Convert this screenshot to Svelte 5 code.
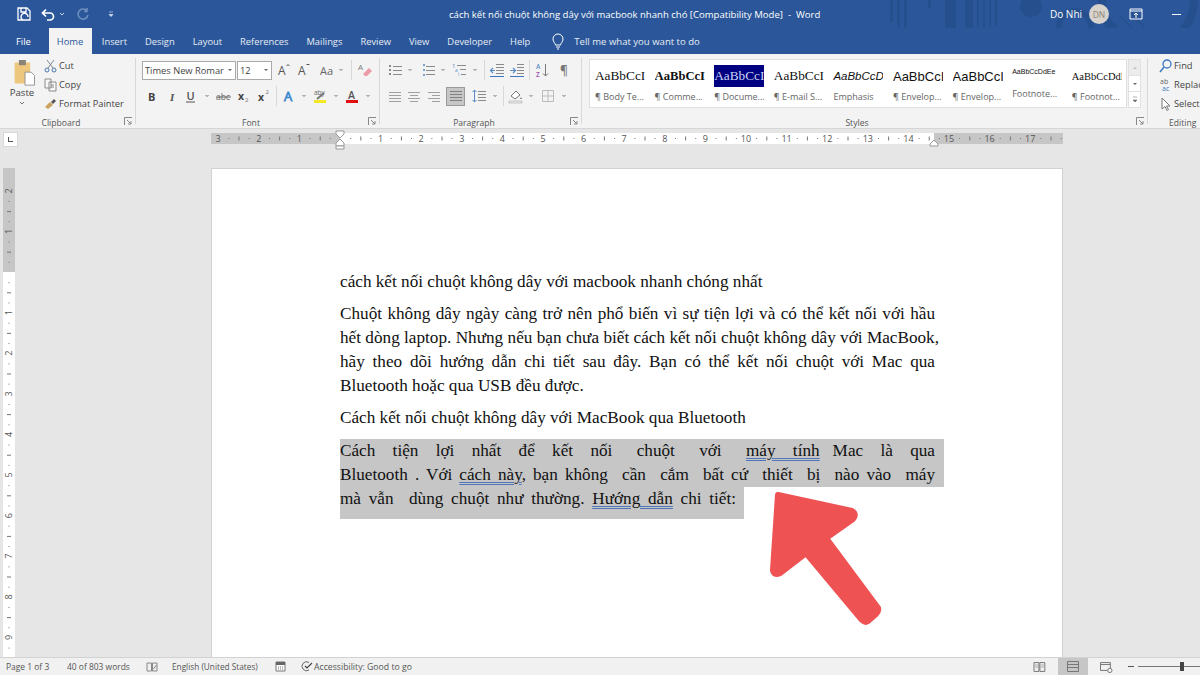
<script>
	const G = '#6b6b6b';
	const L = '#8a8a8a';
	const B = '#5a8cc8';

	const lines = (ys, x1, x2, c = L) => ys.map((y) => `<path d="M${x1} ${y}H${x2}" stroke="${c}"/>`).join('');
	const dots = (ys, x, c = G) => ys.map((y) => `<rect x="${x}" y="${y - 1}" width="2" height="2" fill="${c}"/>`).join('');

	const icons = {
		chev: `<path d="M6.5 7l1.5 1.5L9.5 7" fill="none" stroke="#777"/>`,
		grow: `<text x="2" y="13" font-size="12" fill="#555">A</text><path d="M10.5 4l1.5-1.5L13.500 4" fill="none" stroke="#555"/>`,
		shrink: `<text x="2" y="13" font-size="12" fill="#555">A</text><path d="M10.500 2.500h3" fill="none" stroke="#555"/>`,
		aa: `<text x="1" y="12.500" font-size="11" fill="#666">Aa</text>`,
		eraser: `<text x="1" y="8" font-size="8" fill="#777">A</text><path d="M6 12l6-6 3 3-5 5H8z" fill="#ec9aa6"/>`,
		bold: `<text x="4" y="12.500" font-size="11" font-weight="700" fill="#444">B</text>`,
		italic: `<text x="6" y="12.500" font-size="11" font-weight="700" font-style="italic" font-family="Liberation Serif" fill="#555">I</text>`,
		under: `<text x="3.500" y="11.500" font-size="11" font-weight="600" fill="#555">U</text><path d="M3 14h9" stroke="#555"/>`,
		strike: `<text x="0" y="11.500" font-size="8.500" fill="#666">abc</text><path d="M0 9h15" stroke="#666"/>`,
		sub: `<text x="2" y="11.500" font-size="10.500" font-weight="700" fill="#444">x</text><text x="9" y="14" font-size="6" fill="#777">2</text>`,
		sup: `<text x="2" y="12.500" font-size="10.500" font-weight="700" fill="#444">x</text><text x="9.500" y="6" font-size="6" fill="#777">2</text>`,
		textfx: `<text x="3" y="13" font-size="13" fill="#d8e8f7" stroke="#3a86d0" stroke-width=".8">A</text>`,
		marker: `<text x="2" y="7" font-size="6.500" fill="#666">aby</text><path d="M5 11l7-6" stroke="#777" stroke-width="2"/><rect x="2" y="12" width="12" height="3" fill="#f4e826"/>`,
		color: `<text x="4" y="10.500" font-size="10.500" font-weight="600" fill="#555">A</text><rect x="2" y="12" width="12" height="3" fill="#e01010"/>`,
		bullets: dots([4, 8, 12], 2, L) + lines([4.500, 8.500, 12.500], 6, 15),
		numbers: dots([3, 8, 13], 3, '#7aa3d4') + lines([4.500, 8.500, 12.500], 6, 15),
		multi: `<text x="1" y="6" font-size="6" fill="#5a8cc8">1</text><text x="4" y="10" font-size="5" fill="#5a8cc8">a</text><text x="7" y="14" font-size="5" fill="#5a8cc8">i</text>` + lines([3.500], 6, 15) + lines([7.500], 9, 15) + lines([12.500], 10, 15),
		outdent: lines([2.500, 5.500, 8.500, 11.500], 7, 15) + `<path d="M1 14.500h14" stroke="#3a78c2"/><path d="M6 8.500H1.500M4 6l-2.500 2.500L4 11" fill="none" stroke="${B}" stroke-width="1.200"/>`,
		indent: lines([2.500, 5.500, 8.500, 11.500], 8, 15) + `<path d="M1 14.500h14" stroke="#3a78c2"/><path d="M1 8.500h5M4 6l2.500 2.500L4 11" fill="none" stroke="${B}" stroke-width="1.200"/>`,
		sort: `<text x="2" y="6.500" font-size="6.500" font-weight="600" fill="#5a8cc8">A</text><text x="2" y="14.500" font-size="6.500" font-weight="600" fill="#a04bb0">Z</text><path d="M11.500 2v12M9 11.500l2.500 2.500 2.500-2.500" fill="none" stroke="#777"/>`,
		pilcrow: `<text x="3" y="13" font-size="12" font-weight="600" fill="#777">¶</text>`,
		left: lines([4.500, 7.500, 10.500, 13.500], 2, 14, '#a0a0a0'),
		center: lines([4.500, 10.500], 2, 14, '#a0a0a0') + lines([7.500, 13.500], 4, 12, '#a0a0a0'),
		right: lines([4.500, 10.500], 2, 14, '#a0a0a0') + lines([7.500, 13.500], 6, 14, '#a0a0a0'),
		justify: lines([3.500, 6.500, 9.500, 12.500], 2, 14, '#808080'),
		spacing: `<path d="M3.500 2v12M1.500 4l2-2 2 2M1.500 12l2 2 2-2" fill="none" stroke="${B}"/>` + lines([3.500, 6.500, 9.500, 12.500], 7, 15),
		shade: `<path d="M3 8l5-5 4 4-5 4z" fill="#fff" stroke="#777"/><rect x="1" y="13" width="13" height="2" fill="#eee" stroke="#999" stroke-width=".5"/><path d="M13 9l1 2h-2z" fill="#777"/>`,
		border: `<path d="M2.500 2.500h11v11h-11zM8 2.500v11M2.500 8h11" fill="none" stroke="#bbb"/>`
	};

	const fontTop = [
		{ k: 'grow', w: 24 }, { k: 'shrink', w: 16 }, { w: 4 }, { k: 'aa', w: 22 }, { k: 'chev', w: 6 },
		{ k: 'sep', w: 14 }, { k: 'eraser', w: 14 }
	];
	const fontBottom = [
		{ k: 'bold', w: 20 }, { k: 'italic', w: 20 }, { k: 'under', w: 18 }, { k: 'chev', w: 14 },
		{ k: 'strike', w: 20 }, { k: 'sub', w: 20 }, { k: 'sup', w: 20 }, { k: 'sep', w: 4 },
		{ k: 'textfx', w: 22 }, { k: 'chev', w: 7 }, { k: 'marker', w: 26 }, { k: 'chev', w: 6 },
		{ k: 'color', w: 26 }, { k: 'chev', w: 6 }
	];
	const paraTop = [
		{ k: 'bullets', w: 18 }, { k: 'chev', w: 12 }, { k: 'numbers', w: 24 }, { k: 'chev', w: 6 },
		{ k: 'multi', w: 26 }, { k: 'chev', w: 6 }, { k: 'sep', w: 12 }, { k: 'outdent', w: 14 },
		{ k: 'indent', w: 25 }, { k: 'sep', w: 1 }, { k: 'sort', w: 23 }, { k: 'pilcrow', w: 24 }
	];
	const paraBottom = [
		{ k: 'left', w: 18 }, { k: 'center', w: 20 }, { k: 'right', w: 20 }, { w: 2 },
		{ k: 'justify', w: 19, on: true }, { k: 'spacing', w: 28 }, { k: 'chev', w: 4 }, { k: 'sep', w: 12 },
		{ k: 'shade', w: 14 }, { k: 'chev', w: 16 }, { k: 'border', w: 18 }, { k: 'chev', w: 14 }
	];

	const tabs = ['Insert', 'Design', 'Layout', 'References', 'Mailings', 'Review', 'View', 'Developer', 'Help'];

	const styles = [
		{ s: 'AaBbCcI', l: '¶ Body Te...', c: 'serif' },
		{ s: 'AaBbCcI', l: '¶ Comme...', c: 'serif strong' },
		{ s: 'AaBbCcI', l: '¶ Docume...', c: 'serif navy' },
		{ s: 'AaBbCcI', l: '¶ E-mail S...', c: 'serif' },
		{ s: 'AaBbCcD', l: 'Emphasis', c: 'ital' },
		{ s: 'AaBbCcI', l: '¶ Envelop...', c: 'sans' },
		{ s: 'AaBbCcI', l: '¶ Envelop...', c: 'sans' },
		{ s: 'AaBbCcDdEe', l: 'Footnote...', c: 'tiny' },
		{ s: 'AaBbCcDdE', l: '¶ Footnot...', c: 'serif small' }
	];

	// ruler numbers sit one cm apart, starting from the left margin
	const CM = 40.6;
	const hMarks = [];
	for (let n = -3; n <= 17; n++) hMarks.push({ n: Math.abs(n), x: 129 + n * CM });
	const vMarks = [];
	for (let n = -2; n <= 9; n++) vMarks.push({ n: Math.abs(n), y: 104 + n * CM });
	const quarter = [10.15, 20.3, 30.45];
</script>

{#snippet cells(items)}
	{#each items as it}
		{#if it.k === 'sep'}
			<span class="cell" style="width:{it.w}px"><i class="vsep"></i></span>
		{:else if it.k}
			<span class="cell" class:on={it.on} style="width:{it.w}px">
				<svg width="16" height="16" viewBox="0 0 16 16">{@html icons[it.k]}</svg>
			</span>
		{:else}
			<span class="cell" style="width:{it.w}px"></span>
		{/if}
	{/each}
{/snippet}

{#snippet launcher()}
	<svg class="launch" width="9" height="9" viewBox="0 0 9 9">
		<path d="M.5 8V.5H8M3 3l4 4M4 7h3V4" fill="none" stroke="#888" />
	</svg>
{/snippet}

<div class="app">
	<header class="titlebar">
		<svg class="deco" width="350" height="54" viewBox="850 0 350 54">
			<g fill="#264f8e">
				<rect x="890" y="0" width="3" height="22" /><rect x="897" y="0" width="3" height="27" />
				<rect x="904" y="0" width="3" height="30" /><rect x="928" y="0" width="3" height="8" />
				<rect x="945" y="0" width="11" height="32" /><rect x="965" y="0" width="8" height="40" />
				<rect x="977" y="0" width="2" height="38" /><rect x="983" y="0" width="2" height="36" />
				<rect x="989" y="0" width="2" height="32" /><rect x="995" y="0" width="2" height="26" />
				<circle cx="1031" cy="6" r="11" />
			</g>
			<g fill="none" stroke="#264f8e">
				<circle cx="1075" cy="27" r="16" stroke-width="6" />
				<circle cx="1148" cy="0" r="46" stroke-width="8" />
				<path d="M1112 22l22 20M1120 16l26 26M1128 10l28 30" stroke-width="1.500" />
			</g>
		</svg>
		<div class="qat">
			<svg width="16" height="16" viewBox="0 0 16 16">
				<path d="M2 2h9l3 3v9H2z" fill="none" stroke="#fff" stroke-width="1.300" />
				<path d="M5 2v4h5V2M7 14a3.500 3.500 0 1 1 5-3" fill="none" stroke="#fff" stroke-width="1.300" />
			</svg>
			<svg class="undo" width="14" height="14" viewBox="0 0 14 14">
				<path d="M2 6h7a3.500 3.500 0 0 1 0 7H6M5 2.500L1.500 6 5 9.500" fill="none" stroke="#fff" stroke-width="1.700" />
			</svg>
			<svg class="mini" width="8" height="8" viewBox="0 0 8 8"><path d="M2 3l2 2 2-2" fill="none" stroke="#c9d6ea" /></svg>
			<svg class="redo" width="14" height="14" viewBox="0 0 14 14">
				<path d="M11 4a5 5 0 1 0 1 4M11 1v3.500H8" fill="none" stroke="#6f8fc0" stroke-width="1.500" />
			</svg>
			<svg class="custom" width="8" height="8" viewBox="0 0 8 8"><path d="M2 2h4M2 4.500l2 2 2-2z" fill="#dfe7f3" stroke="#dfe7f3" stroke-width=".6" /></svg>
		</div>
		<div class="doc-title">cách kết nối chuột không dây với macbook nhanh chó [Compatibility Mode]  -  Word</div>
		<div class="account">
			<span class="user">Do Nhi</span>
			<span class="avatar">DN</span>
			<svg class="display" width="14" height="12" viewBox="0 0 14 12">
				<path d="M1 1h12v10H1zM1 3h12M7 10V5M5 7l2-2 2 2" fill="none" stroke="#fff" />
			</svg>
			<span class="minimize"></span>
		</div>
	</header>

	<nav class="tabs">
		<span class="tab file">File</span>
		<span class="tab home">Home</span>
		{#each tabs as t}
			<span class="tab">{t}</span>
		{/each}
		<span class="tellme">
			<svg width="14" height="17" viewBox="0 0 14 17">
				<path d="M4.500 12C4 9.500 2 9 2 6a5 5 0 0 1 10 0c0 3-2 3.500-2.500 6zM5 14h4M6 16h2" fill="none" stroke="#fff" />
			</svg>
			Tell me what you want to do
		</span>
	</nav>

	<section class="ribbon">
		<div class="group clipboard">
			<div class="body clip-body">
				<div class="paste">
					<svg width="24" height="26" viewBox="0 0 26 30">
						<rect x="1" y="3" width="18" height="24" rx="1" fill="#eec77f" />
						<rect x="6" y="0" width="8" height="6" fill="#8a8378" />
						<path d="M13 14h7l4 4v11H13z" fill="#fff" stroke="#8a8a8a" />
					</svg>
					<span>Paste</span>
					<svg width="8" height="8" viewBox="0 0 8 8"><path d="M2 3l2 2 2-2" fill="none" stroke="#777" /></svg>
				</div>
				<div class="cmds">
					<div class="cmd">
						<svg width="13" height="14" viewBox="0 0 13 14">
							<path d="M3 1l6 8M10 1L4 9" stroke="#7b8794" fill="none" />
							<circle cx="3" cy="11" r="2" fill="none" stroke="#4a78b0" /><circle cx="10" cy="11" r="2" fill="none" stroke="#4a78b0" />
						</svg>
						Cut
					</div>
					<div class="cmd">
						<svg width="13" height="14" viewBox="0 0 13 14">
							<path d="M1 1h6v9H1zM5 4h7v9H5z" fill="#f7f7f7" stroke="#8a8a8a" />
							<path d="M7 7h3M7 9h3" stroke="#8a8a8a" />
						</svg>
						Copy
					</div>
					<div class="cmd">
						<svg width="13" height="14" viewBox="0 0 13 14">
							<path d="M1 10l5-5 3 3-5 4z" fill="#c9a25f" /><path d="M7 5l3-3 2 2-3 3z" fill="#555" />
						</svg>
						Format Painter
					</div>
				</div>
			</div>
			<div class="label">Clipboard</div>
			{@render launcher()}
		</div>

		<div class="group font">
			<div class="body">
				<div class="row">
					<span class="combo name">Times New Romar<i class="caret"></i></span>
					<span class="combo size">12<i class="caret"></i></span>
					{@render cells(fontTop)}
				</div>
				<div class="row">{@render cells(fontBottom)}</div>
			</div>
			<div class="label">Font</div>
			{@render launcher()}
		</div>

		<div class="group para">
			<div class="body">
				<div class="row">{@render cells(paraTop)}</div>
				<div class="row">{@render cells(paraBottom)}</div>
			</div>
			<div class="label">Paragraph</div>
			{@render launcher()}
		</div>

		<div class="group stylesg">
			<div class="body gallery-wrap">
				<div class="gallery">
					{#each styles as st}
						<div class="style">
							<div class="sample {st.c}"><span>{st.s}</span></div>
							<div class="sname">{st.l}</div>
						</div>
					{/each}
				</div>
				<div class="scroller">
					<span class="dim"><svg width="8" height="8" viewBox="0 0 8 8"><path d="M2 5l2-2 2 2z" fill="#bbb" /></svg></span>
					<span><svg width="8" height="8" viewBox="0 0 8 8"><path d="M2 3l2 2 2-2z" fill="#666" /></svg></span>
					<span><svg width="8" height="8" viewBox="0 0 8 8"><path d="M2 1h4M2 4l2 2 2-2z" fill="#666" stroke="#666" stroke-width=".5" /></svg></span>
				</div>
			</div>
			<div class="label">Styles</div>
			{@render launcher()}
		</div>

		<div class="group editing">
			<div class="body cmds">
				<div class="cmd">
					<svg width="13" height="14" viewBox="0 0 13 14">
						<circle cx="8" cy="5" r="4" fill="none" stroke="#3a78c2" stroke-width="1.300" /><path d="M5 8l-4 5" stroke="#3a78c2" stroke-width="1.500" />
					</svg>
					Find
				</div>
				<div class="cmd">
					<svg width="13" height="14" viewBox="0 0 13 14">
						<text x="1" y="6" font-size="7" fill="#666">ab</text>
						<text x="3" y="13" font-size="7" fill="#3a78c2">ac</text>
					</svg>
					Replace
				</div>
				<div class="cmd">
					<svg width="13" height="14" viewBox="0 0 13 14">
						<path d="M3 1v11l3-2.500 2 4 1.500-.8-2-3.700h3.500z" fill="#fff" stroke="#777" />
					</svg>
					Select
				</div>
			</div>
			<div class="label">Editing</div>
		</div>
	</section>

	<main class="workspace">
		<div class="corner-cell">
			<span class="corner"><i></i></span>
		</div>
		<svg class="hruler" width="852" height="20" viewBox="0 0 852 20">
			<rect x="0" y="4" width="852" height="11" fill="#fff" />
			<rect x="0" y="4" width="129" height="11" fill="#c6c6c6" />
			<rect x="723" y="4" width="129" height="11" fill="#c6c6c6" />
			{#each hMarks as m}
				{#if m.n > 0}
					<text x={m.x} y="13" text-anchor="middle" font-size="9" fill="#555">{m.n}</text>
				{/if}
				{#each quarter as q, i}
					{#if m.x + q < 850}
						<rect x={m.x + q} y={i === 1 ? 7.5 : 9} width="1" height={i === 1 ? 4 : 1} fill="#777" />
					{/if}
				{/each}
			{/each}
			<path d="M125 2h8v3l-4 4-4-4z" fill="#fff" stroke="#999" />
			<path d="M125 14l4-4 4 4v3h-8z" fill="#fff" stroke="#999" />
			<path d="M125 17h8v3h-8z" fill="#fff" stroke="#999" />
			<path d="M723 11l4 4v2h-8v-2z" fill="#fff" stroke="#999" />
		</svg>
		<div class="filler"></div>

		<svg class="vruler" width="12" height="490" viewBox="0 0 12 490">
			<rect width="12" height="104" fill="#c6c6c6" />
			<rect y="104" width="12" height="386" fill="#fff" />
			{#each vMarks as m}
				{#if m.n > 0}
					<text transform="translate(9 {m.y}) rotate(-90)" text-anchor="middle" font-size="9" fill="#555">{m.n}</text>
				{/if}
				{#each quarter as q, i}
					<rect x={i === 1 ? 4 : 5.5} y={m.y + q} width={i === 1 ? 4 : 1} height="1" fill="#777" />
				{/each}
			{/each}
		</svg>

		<article class="page">
			<p>cách kết nối chuột không dây với macbook nhanh chóng nhất</p>
			<p class="just">
				<span>Chuột không dây ngày càng trở nên phổ biến vì sự tiện lợi và có thể kết nối với hầu</span>
				<span class="wide">hết dòng laptop. Nhưng nếu bạn chưa biết cách kết nối chuột không dây với MacBook,</span>
				<span>hãy theo dõi hướng dẫn chi tiết sau đây. Bạn có thể kết nối chuột với Mac qua</span>
				<span class="free">Bluetooth hoặc qua USB đều được.</span>
			</p>
			<p>Cách kết nối chuột không dây với MacBook qua Bluetooth</p>
			<p class="just sel">
				<span>Cách tiện lợi nhất để kết nối <i class="extra"></i>chuột <i class="extra"></i>với <i class="extra"></i><u>máy tính</u><i class="gap"></i>Mac là qua</span>
				<span>Bluetooth . Với  <u>cách này</u>, bạn không  cần  cắm  bất cứ  thiết  bị  nào vào  máy</span>
				<span class="last">mà vẫn  dùng chuột như thường. <u>Hướng dẫn</u> chi tiết:</span>
			</p>
			<svg class="arrow" width="130" height="150" viewBox="760 485 130 150">
				<path
					d="M779 495L853 511Q858 514 854 519L827 538L879 608Q880 611 877 614L869 621Q866 623 863 620L807 553L781 573Q775 576 774 570Z"
					fill="#ee5253"
					stroke="#ee5253"
					stroke-width="6"
					stroke-linejoin="round"
				/>
			</svg>
		</article>
		<div class="filler"></div>
	</main>

	<footer class="status">
		<span class="s1">Page 1 of 3</span>
		<span class="s2">40 of 803 words</span>
		<svg class="s3" width="12" height="12" viewBox="0 0 12 12">
			<path d="M1 2h4.500v8H1zM6.500 2H11v8H6.500zM7.500 8l3-4" fill="none" stroke="#888" />
		</svg>
		<span class="s4">English (United States)</span>
		<svg class="s5" width="11" height="11" viewBox="0 0 11 11">
			<path d="M1 1h9v9H1z" fill="#fff" stroke="#777" /><rect x="1" y="1" width="9" height="3" fill="#666" />
			<path d="M3 6h1M5 6h1M7 6h1M3 8h1M5 8h1M7 8h1" stroke="#777" />
		</svg>
		<svg class="s6" width="13" height="13" viewBox="0 0 13 13">
			<path d="M9 2.500A4.500 4.500 0 1 0 9 10" fill="none" stroke="#666" /><path d="M5 6l2 2 5-5" fill="none" stroke="#444" stroke-width="1.200" />
		</svg>
		<span class="s7">Accessibility: Good to go</span>
		<div class="views">
			<svg class="read" width="13" height="12" viewBox="0 0 13 12">
				<path d="M1 1.500h5v9H1zM7 1.500h5v9H7z" fill="none" stroke="#777" /><path d="M2 4h3M2 6h3M8 4h3M8 6h3" stroke="#aaa" />
			</svg>
			<span class="print">
				<svg width="12" height="11" viewBox="0 0 12 11">
					<path d="M.5.500h11v10H.5zM.5 3.500h11M.5 6.500h11" fill="none" stroke="#777" />
				</svg>
			</span>
			<svg class="web" width="13" height="12" viewBox="0 0 13 12">
				<path d="M.5 1.500h10v8H.5zM.5 3.500h10" fill="none" stroke="#777" /><circle cx="10" cy="9.500" r="2.200" fill="#f1f1f1" stroke="#777" />
			</svg>
			<i class="minus"></i>
			<span class="slider"><i></i></span>
		</div>
	</footer>
</div>

<style>
	:global(body) {
		margin: 0;
		background: #e6e6e6;
	}
	.app {
		width: 1200px;
		height: 675px;
		display: flex;
		flex-direction: column;
		overflow: hidden;
		position: relative;
		font-family: 'Open Sans', 'Noto Sans', sans-serif;
		font-size: 9.3px;
		color: #444;
	}

	/* title bar */
	.titlebar {
		height: 28px;
		flex: none;
		background: #2b579a;
		color: #fff;
		display: flex;
		align-items: center;
		position: relative;
	}
	.deco {
		position: absolute;
		right: 0;
		top: 0;
	}
	.qat {
		width: 449px;
		flex: none;
		display: flex;
		align-items: center;
		padding-left: 16px;
		box-sizing: border-box;
	}
	.undo {
		margin-left: 9px;
	}
	.mini {
		margin-left: 3px;
	}
	.redo {
		margin-left: 10px;
	}
	.custom {
		margin-left: 17px;
	}
	.doc-title {
		width: 590px;
		flex: none;
		white-space: pre;
		font-size: 9.55px;
		position: relative;
	}
	.account {
		flex: 1;
		display: flex;
		align-items: center;
		position: relative;
		padding-left: 11px;
	}
	.user {
		font-size: 10px;
		width: 39px;
	}
	.avatar {
		width: 20px;
		height: 20px;
		border-radius: 50%;
		background: #d8d4cd;
		color: #8c8678;
		font-size: 8.5px;
		display: flex;
		align-items: center;
		justify-content: center;
	}
	.display {
		margin-left: 20px;
	}
	.minimize {
		width: 9px;
		height: 1px;
		background: #fff;
		margin-left: 29px;
	}

	/* tabs */
	.tabs {
		height: 26px;
		flex: none;
		background: #2b579a;
		color: #e6ecf5;
		display: flex;
		align-items: stretch;
		padding-left: 7px;
		font-size: 9.35px;
		position: relative;
	}
	.tab {
		padding: 0 9px;
		display: flex;
		align-items: center;
	}
	.file {
		margin-right: 9px;
		color: #fff;
	}
	.home {
		background: #f3f3f3;
		color: #2b579a;
		padding: 0 8px;
		width: 43px;
		box-sizing: border-box;
		margin-right: 1px;
	}
	.tellme {
		display: flex;
		align-items: center;
		gap: 9px;
		margin-left: 12px;
		font-size: 9.55px;
		color: #e6ecf5;
	}

	/* ribbon */
	.ribbon {
		height: 75px;
		flex: none;
		box-sizing: border-box;
		background: #f3f3f3;
		border-bottom: 1px solid #d6d6d6;
		display: flex;
		font-size: 9.3px;
	}
	.group {
		position: relative;
		display: flex;
		flex-direction: column;
		box-sizing: border-box;
		height: 74px;
		padding-top: 2px;
	}
	.group::after {
		content: '';
		position: absolute;
		right: 0;
		top: 4px;
		bottom: 4px;
		width: 1px;
		background: #d8d8d8;
	}
	.editing::after {
		display: none;
	}
	.clipboard {
		width: 136px;
	}
	.clipboard .label {
		padding-right: 14px;
	}
	.font {
		width: 244px;
		padding-left: 6px;
	}
	.font .label,
	.para .label {
		padding-right: 20px;
	}
	.para {
		width: 202px;
		padding-left: 6px;
	}
	.stylesg {
		width: 566px;
	}
	.stylesg .label {
		padding-right: 16px;
	}
	.editing {
		flex: 1;
		overflow: hidden;
		padding-left: 11px;
	}
	.editing .label {
		padding-left: 0;
		text-align: left;
		margin-left: 10px;
	}
	.body {
		height: 57px;
		flex: none;
		padding-top: 1px;
		box-sizing: border-box;
	}
	.label {
		text-align: center;
		font-size: 8.6px;
		color: #555;
		line-height: 14px;
		padding-top: 3px;
	}
	.launch {
		position: absolute;
		right: 3px;
		bottom: 2px;
	}
	.row {
		display: flex;
		align-items: center;
		height: 26px;
	}
	.cell {
		flex: none;
		height: 100%;
		display: flex;
		align-items: center;
		justify-content: center;
		box-sizing: border-box;
	}
	.cell svg {
		flex: none;
	}
	.cell.on {
		background: #c6c6c6;
		height: 19px;
		border: 1px solid #9a9a9a;
	}
	.vsep {
		width: 1px;
		height: 20px;
		background: #d8d8d8;
	}
	.combo {
		flex: none;
		height: 19px;
		box-sizing: border-box;
		background: #fff;
		border: 1px solid #a9a9a9;
		display: flex;
		align-items: center;
		padding-left: 2px;
		color: #444;
		font-size: 9.3px;
		position: relative;
		white-space: nowrap;
		overflow: hidden;
	}
	.name {
		width: 94px;
		margin-right: 1px;
	}
	.size {
		width: 35px;
	}
	.caret {
		position: absolute;
		right: 3px;
		top: 7px;
		border: 2.5px solid transparent;
		border-top-color: #666;
	}

	/* clipboard */
	.clip-body {
		display: flex;
		padding-top: 0;
	}
	.paste {
		width: 44px;
		flex: none;
		display: flex;
		flex-direction: column;
		align-items: center;
		padding-top: 4px;
		box-sizing: border-box;
		font-size: 9.6px;
		line-height: 13px;
	}
	.paste svg:first-child {
		margin-left: 5px;
		margin-bottom: 0;
	}
	.cmds {
		display: flex;
		flex-direction: column;
		padding-top: 0;
	}
	.cmd {
		height: 19px;
		display: flex;
		align-items: center;
		gap: 2px;
		white-space: nowrap;
	}
	.cmd svg {
		flex: none;
	}

	/* styles gallery */
	.gallery-wrap {
		display: flex;
		padding: 3px 0 0 7px;
	}
	.gallery {
		width: 538px;
		height: 49px;
		box-sizing: border-box;
		background: #fff;
		border: 1px solid #e0e0e0;
		display: flex;
		overflow: hidden;
	}
	.style {
		width: 59.6px;
		flex: none;
		padding-left: 5px;
		box-sizing: border-box;
		overflow: hidden;
	}
	.sample {
		height: 22px;
		margin-top: 5px;
		display: flex;
		align-items: center;
		white-space: nowrap;
		color: #111;
		font-size: 13.3px;
	}
	.sample span {
		display: block;
		width: 50px;
		overflow: hidden;
	}
	.serif {
		font-family: 'Liberation Serif', serif;
	}
	.strong {
		font-weight: 700;
		font-size: 12.6px;
	}
	.navy span {
		background: #000080;
		color: #c9d6f5;
		line-height: 22px;
	}
	.ital {
		font-family: 'Liberation Sans', sans-serif;
		font-style: italic;
		font-size: 11.5px;
	}
	.sans {
		font-family: 'Liberation Sans', sans-serif;
		font-size: 13px;
	}
	.tiny {
		font-family: 'Liberation Sans', sans-serif;
		font-size: 7px;
		margin-top: 0;
		height: 22px;
		margin-bottom: 5px;
	}
	.small {
		font-size: 10.5px;
	}
	.sname {
		font-size: 9px;
		color: #666;
		margin-top: 3px;
		white-space: nowrap;
	}
	.scroller {
		width: 13px;
		height: 49px;
		display: flex;
		flex-direction: column;
		margin-left: 1px;
	}
	.scroller span {
		flex: 1;
		background: #fff;
		border: 1px solid #e0e0e0;
		border-top: 0;
		display: flex;
		align-items: center;
		justify-content: center;
	}
	.scroller .dim {
		background: #ececec;
		border-top: 1px solid #e0e0e0;
	}

	/* document area */
	.workspace {
		flex: 1;
		min-height: 0;
		background: #e6e6e6;
		display: grid;
		grid-template-columns: 211px 852px 1fr;
		grid-template-rows: 39px 1fr;
		overflow: hidden;
		position: relative;
	}
	.corner-cell {
		padding: 3px 0 0 3px;
	}
	.corner {
		display: flex;
		width: 15px;
		height: 15px;
		background: #fff;
		border: 1px solid #d8d8d8;
		box-sizing: border-box;
		align-items: center;
		justify-content: center;
	}
	.corner i {
		width: 4px;
		height: 4px;
		border-left: 1.5px solid #555;
		border-bottom: 1.5px solid #555;
	}
	.hruler {
		display: block;
		overflow: visible;
	}
	.vruler {
		display: block;
		margin-left: 3px;
	}
	.page {
		position: relative;
		background: #fff;
		border-left: 1px solid #d2d2d2;
		border-right: 1px solid #d2d2d2;
		border-top: 1px solid #d2d2d2;
		box-sizing: border-box;
		padding: 101px 0 0 128px;
		height: 520px;
		font-family: 'Liberation Serif', serif;
		font-size: 17.2px;
		line-height: 24px;
		color: #111;
	}
	.page p {
		margin: 0 0 8px;
		width: 604px;
	}
	.just span {
		display: block;
		width: 595px;
		white-space: pre-wrap;
		text-align: justify;
		text-align-last: justify;
	}
	.just .wide {
		width: 599px;
	}
	.just .free {
		text-align-last: left;
	}
	.page .sel {
		margin-top: 9px;
	}
	.sel span {
		background: #c6c6c6;
		width: 595px;
		padding-right: 9px;
	}
	.sel .last {
		width: 396px;
		padding-right: 8px;
		padding-bottom: 8px;
	}
	.sel u {
		text-decoration: underline double #4f74b8 1px;
		text-underline-offset: 2px;
	}
	.gap {
		display: inline-block;
		width: 13px;
	}
	.extra {
		display: inline-block;
		width: 7px;
	}
	.arrow {
		position: absolute;
		left: 547px;
		top: 316px;
	}

	/* status bar */
	.status {
		height: 18px;
		flex: none;
		box-sizing: border-box;
		background: #f1f1f1;
		border-top: 1px solid #d2d2d2;
		display: flex;
		align-items: center;
		font-size: 8.45px;
		color: #555;
		white-space: nowrap;
	}
	.status > * {
		flex: none;
	}
	.s1 {
		margin-left: 6px;
		width: 61px;
	}
	.s2 {
		width: 79px;
	}
	.s4 {
		margin-left: 14px;
		width: 103px;
		font-size: 8.25px;
	}
	.s6 {
		margin-left: 14px;
	}
	.s7 {
		margin-left: 1px;
		font-size: 8.7px;
	}
	.views {
		margin-left: auto;
		display: flex;
		align-items: center;
		width: 167px;
		height: 100%;
	}
	.print {
		width: 31px;
		height: 100%;
		margin-left: 12px;
		background: #c6c6c6;
		display: flex;
		align-items: center;
		justify-content: center;
	}
	.web {
		margin-left: 12px;
	}
	.minus {
		width: 6px;
		height: 1px;
		background: #555;
		margin-left: 15px;
	}
	.slider {
		width: 63px;
		height: 1px;
		background: #777;
		margin-left: 4px;
		position: relative;
	}
	.slider i {
		position: absolute;
		left: 42px;
		top: -4px;
		width: 4px;
		height: 9px;
		background: #444;
	}
</style>
